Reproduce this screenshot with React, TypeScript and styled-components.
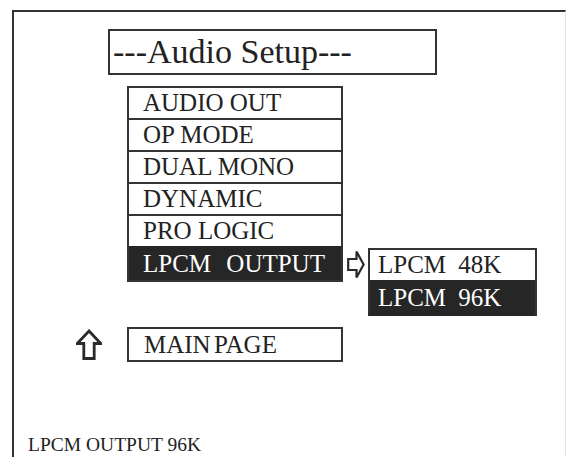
import React from "react";
import styled, { createGlobalStyle } from "styled-components";

const Global = createGlobalStyle`
  html, body { margin: 0; padding: 0; background: #ffffff; overflow: hidden; }
  body { font-family: "Liberation Serif", "Times New Roman", serif; color: #222; }
`;

const Frame = styled.div`
  box-sizing: border-box;
  margin: 10px 0 0 12px;
  width: 554px;
  height: 447px;
  border-top: 2px solid #333;
  border-left: 2px solid #333;
  border-right: 1px solid #e6e6e6;
  display: flex;
  flex-direction: column;
  align-items: flex-start;
`;

const TitleBox = styled.div`
  box-sizing: border-box;
  margin: 17px 0 0 94px;
  width: 329px;
  height: 46px;
  border: 2px solid #333;
  display: flex;
  align-items: center;
  padding-left: 3px;
  font-size: 34px;
  color: #222;
`;

const MenuArea = styled.div`
  display: flex;
  align-items: flex-start;
  margin: 11px 0 0 113px;
`;

const Menu = styled.div`
  box-sizing: border-box;
  width: 216px;
  border: 2px solid #333;
  display: flex;
  flex-direction: column;
`;

const Row = styled.div<{ $selected?: boolean; $gap?: number; $h?: number; $pad?: number }>`
  box-sizing: border-box;
  height: ${(p) => p.$h ?? 32}px;
  display: flex;
  align-items: center;
  padding-left: ${(p) => p.$pad ?? 14}px;
  font-size: 25px;
  white-space: pre;
  word-spacing: ${(p) => p.$gap ?? 0}px;
  background: ${(p) => (p.$selected ? "#262626" : "#ffffff")};
  color: ${(p) => (p.$selected ? "#ffffff" : "#222")};
  border-top: 2px solid ${(p) => (p.$selected ? "#262626" : "#333")};
  &:first-child { border-top: none; height: ${(p) => (p.$h ?? 32) - 2}px; }
`;

const SideGroup = styled.div`
  display: flex;
  align-items: flex-start;
  margin-top: 162px;
`;

const ArrowRight = styled.svg`
  width: 18px;
  height: 31px;
  margin: 1px 3px 0 4px;
  flex: none;
`;

const SubMenu = styled.div`
  box-sizing: border-box;
  width: 169px;
  border: 2px solid #333;
  border-bottom-color: #262626;
  display: flex;
  flex-direction: column;
`;

const MainRow = styled.div`
  display: flex;
  align-items: center;
  margin: 11px 0 0 62px;
`;

const ArrowUp = styled.svg`
  width: 26px;
  height: 31px;
  margin-right: 25px;
  flex: none;
`;

const MainBox = styled.div`
  box-sizing: border-box;
  width: 216px;
  height: 35px;
  border: 2px solid #333;
  display: flex;
  align-items: center;
  padding-left: 15px;
  font-size: 25px;
  word-spacing: -3px;
  color: #222;
`;

const Status = styled.div`
  margin: 72px 0 0 14px;
  font-size: 19.5px;
  line-height: 22px;
  color: #222;
  white-space: nowrap;
`;

const items = ["AUDIO OUT", "OP MODE", "DUAL MONO", "DYNAMIC", "PRO LOGIC"];

export default function App() {
  return (
    <>
      <Global />
      <Frame>
        <TitleBox>---Audio Setup---</TitleBox>
        <MenuArea>
          <Menu>
            {items.map((t) => (
              <Row key={t}>{t}</Row>
            ))}
            <Row $selected $gap={9} $h={34}>
              LPCM OUTPUT
            </Row>
          </Menu>
          <SideGroup>
            <ArrowRight viewBox="0 0 18 31">
              <path
                d="M1.2 10 H9.5 V2.5 L16.6 15.5 L9.5 28.5 V21 H1.2 Z"
                fill="none"
                stroke="#2a2a2a"
                strokeWidth="2.2"
                strokeLinejoin="miter"
              />
            </ArrowRight>
            <SubMenu>
              <Row $gap={6} $pad={8} $h={32}>
                LPCM 48K
              </Row>
              <Row $selected $gap={6} $pad={8} $h={34}>
                LPCM 96K
              </Row>
            </SubMenu>
          </SideGroup>
        </MenuArea>
        <MainRow>
          <ArrowUp viewBox="0 0 26 31">
            <path
              d="M13 2 L24.8 14.5 H18.2 V29.5 H7.8 V14.5 H1.2 Z"
              fill="none"
              stroke="#2a2a2a"
              strokeWidth="2.8"
              strokeLinejoin="miter"
            />
          </ArrowUp>
          <MainBox>MAIN PAGE</MainBox>
        </MainRow>
        <Status>LPCM OUTPUT 96K</Status>
      </Frame>
    </>
  );
}
